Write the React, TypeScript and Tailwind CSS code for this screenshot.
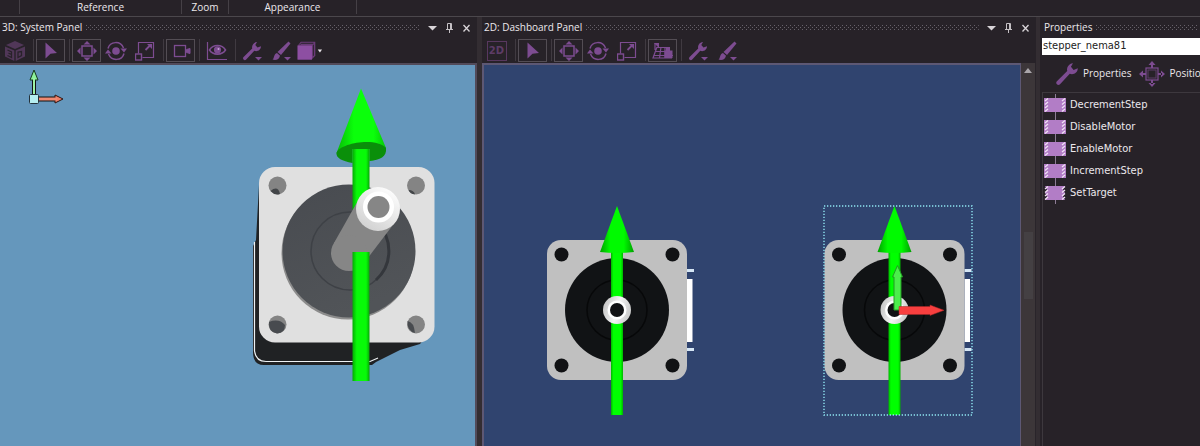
import React from 'react';
import clsx from 'clsx';

type IconProps = { className?: string };

const Cube3D = () => (
  <svg width="22" height="22" viewBox="0 0 22 22" className="opacity-60">
    <path d="M11 1 20 5 11 9 2 5Z" fill="#6d4579" />
    <path d="M1 6.500 10.300 10.500V21L1 16.500Z" fill="#6d4579" />
    <path d="M21 6.500 11.700 10.500V21L21 16.500Z" fill="#6d4579" />
    <path d="M3.500 10 7.500 11.800V17.500L3.500 15.500M4.500 13.200 7.500 14.500M14 12V17.500L17.500 15.500V11.500Z" fill="none" stroke="#29232a" strokeWidth="1.300" />
  </svg>
);

const Box2D = () => (
  <span className="flex h-[20px] w-[20px] items-center justify-center border border-[#58385f] font-['DejaVu_Sans',sans-serif] text-[10px] font-bold text-[#5d3c66]">
    2D
  </span>
);

const Pointer = () => (
  <svg width="22" height="20" viewBox="0 0 22 20">
    <path d="M5.500 1.500 17 12 10.500 12.800 5.500 17.500Z" fill="#7d4c91" />
  </svg>
);

const Move = () => (
  <svg width="20" height="20" viewBox="0 0 20 20" fill="#7d4c91">
    <rect x="5" y="5" width="10" height="10" fill="none" stroke="#7d4c91" strokeWidth="1.500" />
    <path d="M10 0 13.500 3.500H6.500ZM10 20 13.500 16.500H6.500ZM0 10 3.500 6.500V13.500ZM20 10 16.500 6.500V13.500Z" />
  </svg>
);

const Rotate = () => (
  <svg width="22" height="20" viewBox="0 0 22 20" fill="#7d4c91">
    <circle cx="11" cy="10" r="3.800" />
    <path d="M3 7.500C5 0 15.500 -0.500 18.500 7M19 12.500C17 20 6.500 20.500 3.500 13" fill="none" stroke="#7d4c91" strokeWidth="1.500" />
    <path d="M15.500 7.500H22L19 11.500ZM0 12.500 3 8.500 6.500 12.500Z" />
  </svg>
);

const Scale = () => (
  <svg width="20" height="20" viewBox="0 0 20 20" fill="none" stroke="#7d4c91">
    <path d="M3.500 12.500V1.500H18.500V16.500H7.500" strokeWidth="1.200" />
    <rect x="0.500" y="13" width="6" height="6" strokeWidth="1.400" />
    <path d="M10.500 9 16 3.500" strokeWidth="1.800" />
    <path d="M12 3H17V8Z" fill="#7d4c91" stroke="none" />
  </svg>
);

const Camera = () => (
  <svg width="20" height="20" viewBox="0 0 20 20">
    <rect x="3.500" y="4.500" width="11" height="11" fill="none" stroke="#7d4c91" strokeWidth="1.300" />
    <path d="M15.500 8.500 19 7.500V12.500L15.500 11.500Z" fill="#7d4c91" stroke="#7d4c91" />
  </svg>
);

const Eye = () => (
  <svg width="21" height="20" viewBox="0 0 21 20" fill="none" stroke="#7d4c91">
    <path d="M1.500 1V18.500H21" strokeWidth="1.200" />
    <path d="M3.500 9C7 3 16 3 19.500 9C16 14.500 7 14.500 3.500 9Z" strokeWidth="1.600" />
    <circle cx="11.500" cy="8.800" r="3.600" fill="#7d4c91" stroke="none" />
    <circle cx="12.500" cy="8" r="1" fill="#c7a3d4" stroke="none" />
  </svg>
);

const WrenchShape = () => (
  <path d="M1.800 18.800C0.800 18 0.800 16.800 1.600 16L10.200 7.600C9.500 4.500 11.500 1.200 15 1L13.300 4 15.500 6.600 19 5.200C19 8.800 15.500 11 12.300 9.800L4.200 18.500C3.500 19.300 2.500 19.400 1.800 18.800Z" fill="#7d4c91" />
);

const Wrench = () => (
  <svg width="22" height="20" viewBox="0 0 22 20">
    <WrenchShape />
    <path d="M13 16H20L16.500 19.500Z" fill="#7d4c91" />
  </svg>
);

const Brush = () => (
  <svg width="22" height="20" viewBox="0 0 22 20" fill="#7d4c91">
    <path d="M17.500 0.500 19.500 2.500 10 14 6.500 11Z" />
    <path d="M6 12 9 14.800C8.500 18.500 4.500 19.800 1.500 18.500C3.500 17.500 2.500 13 6 12Z" />
    <path d="M13 16H20L16.500 19.500Z" />
  </svg>
);

const SolidBox = () => (
  <svg width="28" height="20" viewBox="0 0 28 20">
    <path d="M1 4 4 0.500H19V15L15.500 18.500H1Z" fill="#6a3b78" />
    <path d="M0.500 4.500H15.500V19H0.500Z" fill="#8d4fa2" />
    <path d="M3 3.500 4.500 2H17M17 3.500V15" fill="none" stroke="#29232a" />
    <path d="M21.500 8.500H26L23.800 11.500Z" fill="#e8e4e8" />
  </svg>
);

const GridLock = () => (
  <svg width="22" height="18" viewBox="0 0 22 18" fill="none" stroke="#7d4c91">
    <path d="M5 5.500H16M3.500 9.500H20M2 13.500H21M5 5 1 16H20M9 5 7.500 16M13 5V16M3 1V8" strokeWidth="1.200" />
    <path d="M2 1H7V6ZM12.500 8.500H20.500V16H12.500ZM14 5H18V9H14Z" fill="#7d4c91" stroke="none" />
  </svg>
);

const PositionIcon = () => (
  <svg width="26" height="26" viewBox="0 0 26 26" fill="#7d4c91">
    <rect x="7" y="7" width="12" height="12" fill="none" stroke="#7d4c91" strokeWidth="1.200" />
    <rect x="9" y="9" width="8" height="8" fill="none" stroke="#5d3c66" />
    <path d="M13 0 16.500 4H9.500ZM13 26 16.500 22H9.500ZM0 13 4 9.500V16.500ZM26 13 22 9.500V16.500ZM12 3H14V7H12ZM12 19H14V23H12ZM3 12H7V14H3ZM19 12H23V14H19Z" />
  </svg>
);

const MethodIcon = ({ notched }: { notched?: boolean }) => (
  <svg width="22" height="22" viewBox="0 0 22 22" className="shrink-0">
    <path d="M11.500 0V22" stroke="#8d7c96" />
    <path d={notched ? 'M1 4H21L19 7.500 21 11 19 14.500 21 18H1L3 14.500 1 11 3 7.500Z' : 'M0 4H22V18H0Z'} fill="#b27dc6" />
    <path d="M1 7 4 4.500M1 10.500 4 8M1 14 4 11.500M1 17.500 4 15M18 7 21 4.500M18 10.500 21 8M18 14 21 11.500M18 17.500 21 15" stroke="#f0e2f4" strokeWidth="1.300" />
  </svg>
);

const Grip = ({ className }: IconProps) => (
  <svg className={clsx('h-[6px] min-w-0 flex-1', className)}>
    <defs>
      <pattern id="grip" width="4" height="4" patternUnits="userSpaceOnUse">
        <path d="M0 0H1V1H0ZM2 2H3V3H2Z" fill="#67616a" />
      </pattern>
    </defs>
    <rect width="100%" height="5" fill="url(#grip)" />
  </svg>
);

const TitleBar = ({ title, controls }: { title: string; controls?: boolean }) => (
  <div className="flex h-[21px] shrink-0 items-center px-[2px]">
    <h2 className="whitespace-nowrap text-[10px] font-medium text-[#ece8ec]">{title}</h2>
    <Grip className="ml-[4px]" />
    {controls && (
      <div className="ml-[4px] flex">
        <button aria-label="Panel menu" className="flex w-[17px] justify-center">
          <svg width="9" height="10" viewBox="0 0 9 10"><path d="M0 3H9L4.500 7.500Z" fill="#d8d4d8" /></svg>
        </button>
        <button aria-label="Pin" className="flex w-[17px] justify-center">
          <svg width="9" height="10" viewBox="0 0 9 10"><path d="M2.500 6V0.500H6.500V6M5.500 1V6M1 6.500H8M4.500 7V10" fill="none" stroke="#c4c0c4" /></svg>
        </button>
        <button aria-label="Close" className="flex w-[17px] justify-center">
          <svg width="9" height="10" viewBox="0 0 9 10"><path d="M1.500 2 7.500 8.500M7.500 2 1.500 8.500" stroke="#d8d4d8" strokeWidth="1.300" /></svg>
        </button>
      </div>
    )}
  </div>
);

const Tool = ({ label, active, children }: { label: string; active?: boolean; children: React.ReactNode }) => (
  <button
    aria-label={label}
    className={clsx('flex h-[23px] w-[29px] shrink-0 items-center justify-center border', active ? 'border-[#534d54]' : 'border-transparent')}
  >
    {children}
  </button>
);

const Separator = () => <div className="ml-[4px] mr-[2px] h-[22px] w-px shrink-0 bg-[#403a41]" />;

const Toolbar = ({ children }: { children: React.ReactNode }) => (
  <div className="flex h-[25px] shrink-0 items-start overflow-hidden pt-px">{children}</div>
);

// Stepper motor seen straight from the front
const FrontMotor = ({ x }: { x: number }) => (
  <g transform={`translate(${x} 310)`}>
    <path d="M70 -41H77V-38H70ZM70 38H77V41H70Z" fill="#d5e6f5" />
    <path d="M70 -31H75.500V32H70Z" fill="#fff" />
    <rect x="-70" y="-70" width="140" height="140" rx="14" fill="#c0c0c0" />
    {[-55.5, 55.5].map((cx) => [-55.5, 55.5].map((cy) => <circle key={`${cx}${cy}`} cx={cx} cy={cy} r="7" fill="#111214" />))}
    <circle r="52" fill="#111315" />
    <circle r="30" fill="none" stroke="#070809" strokeWidth="1.500" />
    <path d="M-6 -60H6V105H-6Z" fill="url(#shaft)" />
    <path d="M0 -104 17 -58Q0 -56 -17 -58Z" fill="url(#cone)" />
    <circle r="14" fill="url(#hub)" />
    <circle r="9.500" fill="#fff" />
    <circle r="7" fill="#111214" />
  </g>
);

const DashboardScene = () => (
  <svg className="block h-full w-full" viewBox="484 65 536 381" preserveAspectRatio="xMinYMin slice">
    <defs>
      <linearGradient id="shaft">
        <stop offset="0" stopColor="#00b400" />
        <stop offset="0.200" stopColor="#00ff00" />
        <stop offset="0.800" stopColor="#00ff00" />
        <stop offset="1" stopColor="#00b400" />
      </linearGradient>
      <linearGradient id="cone">
        <stop offset="0" stopColor="#00a000" />
        <stop offset="0.300" stopColor="#00fa00" />
        <stop offset="0.700" stopColor="#00fa00" />
        <stop offset="1" stopColor="#00a000" />
      </linearGradient>
      <linearGradient id="hub" x2="1" y2="0.300">
        <stop offset="0" stopColor="#bdbdbd" />
        <stop offset="0.600" stopColor="#f4f4f4" />
        <stop offset="1" stopColor="#d0d0d0" />
      </linearGradient>
    </defs>
    <FrontMotor x={617} />
    <FrontMotor x={894.5} />
    <path d="M897.500 265.500 902.500 277H901V310H894V277H892.500Z" fill="#4bee4b" stroke="#239a23" />
    <path d="M899 306.500H930V305L944 310.300 930 315.500V314.500H899Z" fill="#f83f3f" stroke="#a92727" strokeWidth="0.500" />
    <rect x="824" y="206" width="148" height="209" fill="none" stroke="#8fe6f2" strokeWidth="1.400" strokeDasharray="1.300 1.700" />
  </svg>
);

const SystemScene = () => (
  <svg className="block h-full w-full" viewBox="0 65 475 381" preserveAspectRatio="xMinYMin slice">
    <defs>
      <linearGradient id="arrowShaft">
        <stop offset="0" stopColor="#05a805" />
        <stop offset="0.250" stopColor="#08fa08" />
        <stop offset="0.800" stopColor="#08fa08" />
        <stop offset="1" stopColor="#05a805" />
      </linearGradient>
      <linearGradient id="arrowCone">
        <stop offset="0" stopColor="#07b807" />
        <stop offset="0.350" stopColor="#0bff0b" />
        <stop offset="0.750" stopColor="#0bff0b" />
        <stop offset="1" stopColor="#08c608" />
      </linearGradient>
      <linearGradient id="face" y2="1" x2="0.400">
        <stop offset="0" stopColor="#484b50" />
        <stop offset="1" stopColor="#515458" />
      </linearGradient>
      <linearGradient id="shaftEnd" x1="0.800" y1="0" x2="0.200" y2="1">
        <stop offset="0" stopColor="#fff" />
        <stop offset="1" stopColor="#cfcfcf" />
      </linearGradient>
    </defs>

    <path d="M34 96V76" stroke="#111" strokeWidth="4" />
    <path d="M34 70 38 80H30Z" fill="#8cf09a" stroke="#143a1c" />
    <path d="M34 95V78" stroke="#9df2a5" strokeWidth="2" />
    <path d="M38 99H58" stroke="#111" strokeWidth="5" />
    <path d="M55 95 63 99 55 103Z" fill="#ef7f68" stroke="#2c1612" />
    <path d="M39 99H57" stroke="#f08a72" strokeWidth="3" />
    <rect x="29.500" y="94.500" width="9" height="9" rx="1" fill="#b5eef0" stroke="#23313a" />

    <path d="M259 185 256 240 253 246V352Q253 365 264 365H372L376 362 400 350 420 344 425 338H265Z" fill="#202224" />
    <path d="M254.500 242V351Q256 361.500 266 361.500H370L378 358" fill="none" stroke="#eef2f4" strokeWidth="1.200" />
    <rect x="259" y="167" width="175.500" height="175.500" rx="16" fill="#e0e0e0" />
    {[277.5, 416].map((cx) => [185.5, 324.5].map((cy) => <circle key={`${cx}${cy}`} cx={cx} cy={cy} r="9" fill="#848484" />))}
    <path d="M270.500 191Q278 185 280 194Q275 196 270.500 191ZM408.500 190Q414 190 415 194.500Q410 194 408.500 190Z" fill="#424548" />
    <path d="M269 322Q279 318 285 325Q285 333 277 333.500Q268 332 269 322ZM407.500 321Q414 322 415 333Q407 331 407.500 321Z" fill="#484b4f" />
    <circle cx="348" cy="253" r="66.500" fill="#8c8c8c" />
    <circle cx="349" cy="251" r="66.500" fill="url(#face)" />
    <circle cx="350" cy="251" r="39" fill="none" stroke="#3e4146" strokeWidth="1.500" />
    <path d="M377 223A39 39 0 0 1 376 280" fill="none" stroke="#34373c" strokeWidth="3" />

    <path d="M352.500 148H369.500V210H352.500Z" fill="url(#arrowShaft)" />
    <path d="M361 88.500 386 148Q386 156 374 160L369.500 161V149H352.500V162Q338 160 336.500 153Z" fill="url(#arrowCone)" />
    <path d="M336.500 153C340 143 376 137 386 148C387 157 380 160 369.500 161V149H352.500V163C342 161 336 158 336.500 153Z" fill="#0a8f0a" />
    <path d="M334 243 360 197 396 221 364 263Z" fill="#868686" />
    <circle cx="349" cy="253" r="18" fill="#868686" />
    <circle cx="378" cy="209" r="22" fill="url(#shaftEnd)" />
    <circle cx="378.500" cy="207" r="15.500" fill="#fff" />
    <circle cx="378.500" cy="207" r="11" fill="#868686" />
    <path d="M352.500 252H369.500V381H352.500Z" fill="url(#arrowShaft)" />
  </svg>
);

const methods = ['DecrementStep', 'DisableMotor', 'EnableMotor', 'IncrementStep', 'SetTarget'];

const Ribbon = () => (
  <div className="flex h-[17px] shrink-0 border-b border-[#4b474c] text-[10px] font-medium leading-[14px] text-[#ece8ec]">
    <div className="h-[14px] w-[20px] border-r border-[#454046]" />
    <div className="h-[14px] w-[162px] border-r border-[#454046] text-center">Reference</div>
    <div className="h-[14px] w-[47px] border-r border-[#454046] text-center">Zoom</div>
    <div className="h-[14px] w-[128px] border-r border-[#454046] text-center">Appearance</div>
  </div>
);

export default function App() {
  return (
    <div className="flex h-screen flex-col overflow-hidden bg-[#272228] font-['Open_Sans','Noto_Sans',sans-serif]">
      <Ribbon />
      <main className="flex min-h-0 flex-1">
        <section className="flex min-w-0 flex-[477] flex-col">
          <TitleBar title="3D: System Panel" controls />
          <Toolbar>
            <Tool label="3D view"><Cube3D /></Tool>
            <Separator />
            <Tool label="Select" active><Pointer /></Tool>
            <Separator />
            <Tool label="Move" active><Move /></Tool>
            <Tool label="Rotate"><Rotate /></Tool>
            <Tool label="Scale"><Scale /></Tool>
            <Separator />
            <Tool label="Camera" active><Camera /></Tool>
            <Separator />
            <Tool label="Visibility"><Eye /></Tool>
            <Separator />
            <Tool label="Tools"><Wrench /></Tool>
            <Tool label="Paint"><Brush /></Tool>
            <Tool label="Render mode"><SolidBox /></Tool>
          </Toolbar>
          <div className="min-h-0 flex-1 border-r-2 border-t-2 border-[#524b5a] bg-[#6597bc]">
            <SystemScene />
          </div>
        </section>

        <div className="w-[5px] shrink-0 bg-[#332d32]" />

        <section className="flex min-w-0 flex-[554] flex-col">
          <TitleBar title="2D: Dashboard Panel" controls />
          <Toolbar>
            <Tool label="2D view"><Box2D /></Tool>
            <Separator />
            <Tool label="Select" active><Pointer /></Tool>
            <Separator />
            <Tool label="Move" active><Move /></Tool>
            <Tool label="Rotate"><Rotate /></Tool>
            <Tool label="Scale"><Scale /></Tool>
            <Separator />
            <Tool label="Snap to grid" active><GridLock /></Tool>
            <Separator />
            <Tool label="Tools"><Wrench /></Tool>
            <Tool label="Paint"><Brush /></Tool>
          </Toolbar>
          <div className="flex min-h-0 flex-1">
            <div className="min-w-0 flex-1 border-l-2 border-r border-t-2 border-[#5d5874] bg-[#30446f]">
              <DashboardScene />
            </div>
            <div className="flex w-[15px] shrink-0 flex-col items-center border-r border-[#29242a] bg-[#3c3639]">
              <button aria-label="Scroll up" className="mt-[5px]">
                <svg width="8" height="5" viewBox="0 0 8 5"><path d="M0 5H8L4 0Z" fill="#aaa6aa" /></svg>
              </button>
              <div className="mt-[159px] h-[67px] w-[9px] bg-[#444043]" />
            </div>
          </div>
        </section>

        <div className="w-[4px] shrink-0 bg-[#332d32]" />

        <section className="flex min-w-0 flex-[160] flex-col overflow-hidden">
          <div className="flex flex-1 flex-col pl-[2px]">
            <TitleBar title="Properties" />
            <input
              aria-label="Component name"
              defaultValue="stepper_nema81"
              className="h-[17px] w-full shrink-0 bg-white px-px pb-[2px] font-['DejaVu_Sans_Condensed','DejaVu_Sans',sans-serif] text-[11px] text-[#222] outline-none"
            />
            <div className="flex h-[37px] shrink-0 items-center gap-[8px] whitespace-nowrap pl-[13px] text-[10px] font-medium text-[#ece8ec]">
              <button className="flex shrink-0 items-center gap-[4px]">
                <svg width="24" height="24" viewBox="0 0 20 20"><WrenchShape /></svg>
                Properties
              </button>
              <button className="flex shrink-0 items-center gap-[4px]">
                <PositionIcon />
                Position
              </button>
            </div>
            <ul className="flex-1 border-l border-t border-[#3d383e] pl-px pt-px font-['DejaVu_Sans_Condensed','DejaVu_Sans',sans-serif] text-[11px] text-[#ece8ec]">
              {methods.map((name) => (
                <li key={name} className="flex h-[22px] items-center gap-[4px] whitespace-nowrap">
                  <MethodIcon notched={name === 'SetTarget'} />
                  {name}
                </li>
              ))}
            </ul>
          </div>
        </section>
      </main>
    </div>
  );
}
